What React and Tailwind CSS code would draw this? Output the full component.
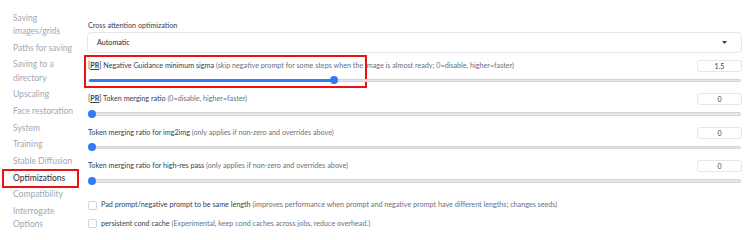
import { useState } from "react";

const sideItems = [
    "Saving images/grids",
    "Paths for saving",
    "Saving to a directory",
    "Upscaling",
    "Face restoration",
    "System",
    "Training",
    "Stable Diffusion",
    "Optimizations",
    "Compatibility",
    "Interrogate Options",
];

const sliders = [
    { pr: true, title: "Negative Guidance minimum sigma", hint: "(skip negative prompt for some steps when the image is almost ready; 0=disable, higher=faster)", value: 1.5, max: 4, boxed: true },
    { pr: true, title: "Token merging ratio", hint: "(0=disable, higher=faster)", value: 0, max: 0.9 },
    { pr: false, title: "Token merging ratio for img2img", hint: "(only applies if non-zero and overrides above)", value: 0, max: 0.9 },
    { pr: false, title: "Token merging ratio for high-res pass", hint: "(only applies if non-zero and overrides above)", value: 0, max: 0.9 },
];

function SliderRow({ item }) {
    const pct = (item.value / item.max) * 100;
    return (
        <div className="relative h-[33.5px]">
            {item.boxed && (
                <div className="absolute left-[-4px] top-0 w-[283px] h-[33px] border-2 border-[#ee1111] pointer-events-none"></div>
            )}
            <div className="flex items-center justify-between h-[21px]">
                <span className="text-[#374151]">
                    {item.pr && (
                        <>
                            [<span className="font-bold underline">PR</span>]{" "}
                        </>
                    )}
                    {item.title} <span className="text-[#6b7280]">{item.hint}</span>
                </span>
                <div className="w-[45px] h-[12px] rounded-[3px] border border-[#e5e7eb] flex items-center justify-center text-[#374151] text-[7px]">
                    {item.value}
                </div>
            </div>
            {/* track */}
            <div className="relative h-[8px] mr-[1px]">
                <div className="absolute left-0 right-0 top-[2.5px] h-[3.5px] rounded-full bg-[#e5e7eb] border border-[#cfd3d9]"></div>
                <div
                    className="absolute left-[1px] top-[2.5px] h-[3.5px] rounded-full bg-[#2f7cf6]"
                    style={{ width: `calc(${pct}% - ${pct * 0.08}px)` }}
                ></div>
                <div
                    className="absolute top-0 w-[8px] h-[8px] rounded-full bg-[#2f7cf6]"
                    style={{ left: `calc(${pct}% - ${pct * 0.08}px)` }}
                ></div>
            </div>
        </div>
    );
}

function Check({ title, hint }) {
    const [on, setOn] = useState(false);
    return (
        <label className="flex items-center gap-[4px] h-[18.5px] cursor-pointer" onClick={() => setOn(!on)}>
            <span className={"w-[9px] h-[9px] rounded-[2px] border " + (on ? "bg-[#2f7cf6] border-[#2f7cf6]" : "border-[#d1d5db] bg-white")}></span>
            <span className="text-[#374151]">
                {title} <span className="text-[#6b7280]">{hint}</span>
            </span>
        </label>
    );
}

export default function App() {
    return (
        <div className="w-[750px] h-[240px] overflow-hidden bg-white flex" style={{ fontFamily: "Lato, 'Liberation Sans', sans-serif" }}>
            {/* sidebar */}
            <div className="w-[81px] shrink-0 pt-[11.7px] px-[2px] flex flex-col gap-[3.4px] text-[8.5px] leading-[13.3px] text-[#a3a8b1]">
                {sideItems.map((s) =>
                    s === "Optimizations" ? (
                        <div key={s} className="border-2 border-[#ee1111] pl-[9px] my-[-2.5px] py-[0.5px] text-[#1f2937]">
                            {s}
                        </div>
                    ) : (
                        <div key={s} className="pl-[11px]">{s}</div>
                    )
                )}
            </div>

            {/* content */}
            <div className="flex-1 pl-[6px] pr-[8px] pt-[19px] text-[7.2px] leading-[10px]">
                <div className="h-[13px] pl-[1px] flex items-center text-[#374151]">Cross attention optimization</div>
                <div className="h-[21px] rounded-[4px] border border-[#e5e7eb] flex items-center justify-between pl-[9px] pr-[14px] text-[#1f2937]">
                    <span>Automatic</span>
                    <svg width="5" height="3" viewBox="0 0 5 3"><path d="M0 0h5L2.5 3z" fill="#374151" /></svg>
                </div>
                <div className="mt-[2px] pl-[1px]">
                    {sliders.map((s) => (
                        <SliderRow key={s.title} item={s} />
                    ))}
                </div>
                <div className="mt-[7px] pl-[1px]">
                    <Check title="Pad prompt/negative prompt to be same length" hint="(improves performance when prompt and negative prompt have different lengths; changes seeds)" />
                    <Check title="persistent cond cache" hint="(Experimental, keep cond caches across jobs, reduce overhead.)" />
                </div>
            </div>
        </div>
    );
}
